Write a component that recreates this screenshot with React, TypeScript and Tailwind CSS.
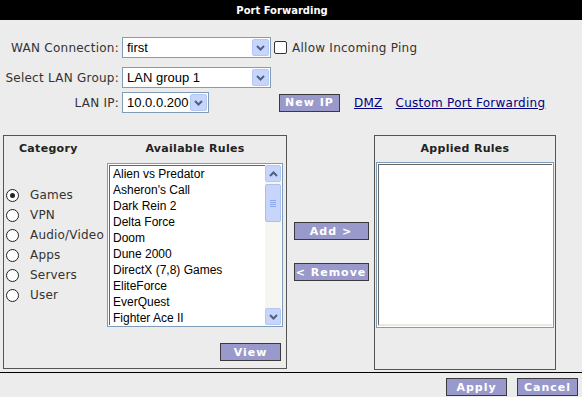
import React from "react";

const V = { fontFamily: '"DejaVu Sans", Verdana, sans-serif' };
const A = { fontFamily: '"Liberation Sans", Arial, sans-serif' };

function Chevron({ up = false }: { up?: boolean }) {
  return (
    <svg width="9" height="6" viewBox="0 0 9 6">
      <path
        d={up ? "M1 5 L4.5 1.5 L8 5" : "M1 1 L4.5 4.5 L8 1"}
        fill="none"
        stroke="#4d6185"
        strokeWidth="2"
      />
    </svg>
  );
}

function Select({ value, w }: { value: string; w: string }) {
  return (
    <div className={`${w} h-[21px] bg-white border border-[#7f9db9] flex items-center p-[1px]`}>
      <div className="flex-1 text-[13px] text-black pl-[3px] leading-none" style={A}>
        {value}
      </div>
      <div className="w-[17px] h-[17px] bg-[#c7d5fb] border border-[#b5c8f4] rounded-[2px] flex items-center justify-center">
        <Chevron />
      </div>
    </div>
  );
}

function Btn({ label, w }: { label: string; w: string }) {
  return (
    <div
      className={`${w} h-[18px] bg-[#9999cc] border border-[#3a3a3a] text-white font-bold text-[11px] flex items-center justify-center leading-none tracking-[1px]`}
      style={V}
    >
      {label}
    </div>
  );
}

function Radio({ checked, label }: { checked?: boolean; label: string }) {
  return (
    <div className="h-[20px] flex items-center">
      <div className="ml-[2px] w-[13px] h-[13px] rounded-full border border-[#222] bg-white flex items-center justify-center">
        {checked && <div className="w-[5px] h-[5px] rounded-full bg-[#222]" />}
      </div>
      <span className="ml-[11px] text-[12px] text-[#333] tracking-[0.2px] whitespace-nowrap" style={V}>
        {label}
      </span>
    </div>
  );
}

const rules = [
  "Alien vs Predator",
  "Asheron's Call",
  "Dark Rein 2",
  "Delta Force",
  "Doom",
  "Dune 2000",
  "DirectX (7,8) Games",
  "EliteForce",
  "EverQuest",
  "Fighter Ace II",
];

export default function App() {
  return (
    <div className="w-[582px] h-[397px] bg-[#ececec] overflow-hidden flex flex-col">
      <div
        className="h-[20px] bg-black text-white font-bold text-[10px] flex items-center justify-center pr-[18px]"
        style={V}
      >
        Port Forwarding
      </div>

      {/* form rows */}
      <div className="flex flex-col mt-[17px] text-[12px] text-[#333] tracking-[0.25px]" style={V}>
        <div className="flex items-center h-[21px]">
          <div className="w-[120px] text-right pr-[1px] whitespace-nowrap">WAN Connection:</div>
          <div className="ml-[2px] tracking-normal">
            <Select value="first" w="w-[149px]" />
          </div>
          <div className="ml-[3px] w-[13px] h-[13px] border border-[#333] rounded-[2px] bg-white" />
          <span className="ml-[5px]">Allow Incoming Ping</span>
        </div>
        <div className="flex items-center h-[21px] mt-[9px]">
          <div className="w-[120px] text-right pr-[1px] whitespace-nowrap">Select LAN Group:</div>
          <div className="ml-[2px] tracking-normal">
            <Select value="LAN group 1" w="w-[149px]" />
          </div>
        </div>
        <div className="flex items-center h-[21px] mt-[4px]">
          <div className="w-[120px] text-right pr-[1px]">LAN IP:</div>
          <div className="ml-[2px] tracking-normal">
            <Select value="10.0.0.200" w="w-[87px]" />
          </div>
          <div className="ml-[70px]">
            <Btn label="New IP" w="w-[61px]" />
          </div>
          <span className="ml-[14px] text-[#000080] underline">DMZ</span>
          <span className="ml-[13px] text-[#000080] underline">Custom Port Forwarding</span>
        </div>
      </div>

      {/* panels */}
      <div className="flex mt-[22px] pl-[3px]">
        {/* left panel */}
        <div className="w-[284px] h-[234px] border border-[#555] flex flex-col">
          <div className="h-[27px] flex items-center text-[11px] font-bold text-[#222] tracking-[0.3px]" style={V}>
            <div className="w-[103px] pl-[15px]">Category</div>
            <div className="w-[176px] text-center">Available Rules</div>
          </div>
          <div className="flex">
            <div className="w-[103px] pt-[22px] flex flex-col">
              <Radio checked label="Games" />
              <Radio label="VPN" />
              <Radio label="Audio/Video" />
              <Radio label="Apps" />
              <Radio label="Servers" />
              <Radio label="User" />
            </div>
            <div className="w-[176px] h-[164px] border border-[#7f9db9] bg-white flex p-[1px]">
              <div className="flex-1 border-t border-l border-[#666] pl-[3px] overflow-hidden">
                {rules.map((r) => (
                  <div key={r} className="h-[16px] text-[12px] leading-[16px] text-black" style={A}>
                    {r}
                  </div>
                ))}
              </div>
              <div className="w-[16px] bg-[#f6f5f0] flex flex-col">
                <div className="h-[17px] bg-[#c7d5fb] border border-[#b5c8f4] rounded-[2px] flex items-center justify-center">
                  <Chevron up />
                </div>
                <div className="mt-[2px] h-[38px] bg-[#c7d5fb] border border-[#a9bff2] rounded-[2px] flex flex-col items-center justify-center gap-[1px]">
                  <div className="w-[6px] h-[1px] bg-[#8ea8ef]" />
                  <div className="w-[6px] h-[1px] bg-[#8ea8ef]" />
                  <div className="w-[6px] h-[1px] bg-[#8ea8ef]" />
                  <div className="w-[6px] h-[1px] bg-[#8ea8ef]" />
                </div>
                <div className="flex-1" />
                <div className="h-[17px] bg-[#c7d5fb] border border-[#b5c8f4] rounded-[2px] flex items-center justify-center">
                  <Chevron />
                </div>
              </div>
            </div>
          </div>
          <div className="flex justify-end pr-[5px] mt-[16px]">
            <Btn label="View" w="w-[61px]" />
          </div>
        </div>

        {/* middle buttons */}
        <div className="w-[87px] flex flex-col items-center pt-[87px] pl-[1px]">
          <Btn label="Add >" w="w-[75px]" />
          <div className="mt-[23px]">
            <Btn label="< Remove" w="w-[75px]" />
          </div>
        </div>

        {/* right panel */}
        <div className="w-[182px] h-[235px] border border-[#555] flex flex-col">
          <div className="h-[26px] flex items-center justify-center text-[11px] font-bold text-[#222] tracking-[0.3px]" style={V}>
            Applied Rules
          </div>
          <div className="mx-[1px] h-[166px] border border-[#7f9db9] bg-white p-[1px] flex">
            <div className="flex-1 border-t border-l border-[#666] border-b-2 border-b-[#ebe9dd]" />
          </div>
        </div>
      </div>

      <div className="mt-[2px] h-[1px] bg-black" />
      <div className="flex justify-end gap-[10px] pr-[4px] mt-[5px]">
        <Btn label="Apply" w="w-[61px]" />
        <Btn label="Cancel" w="w-[61px]" />
      </div>
    </div>
  );
}
